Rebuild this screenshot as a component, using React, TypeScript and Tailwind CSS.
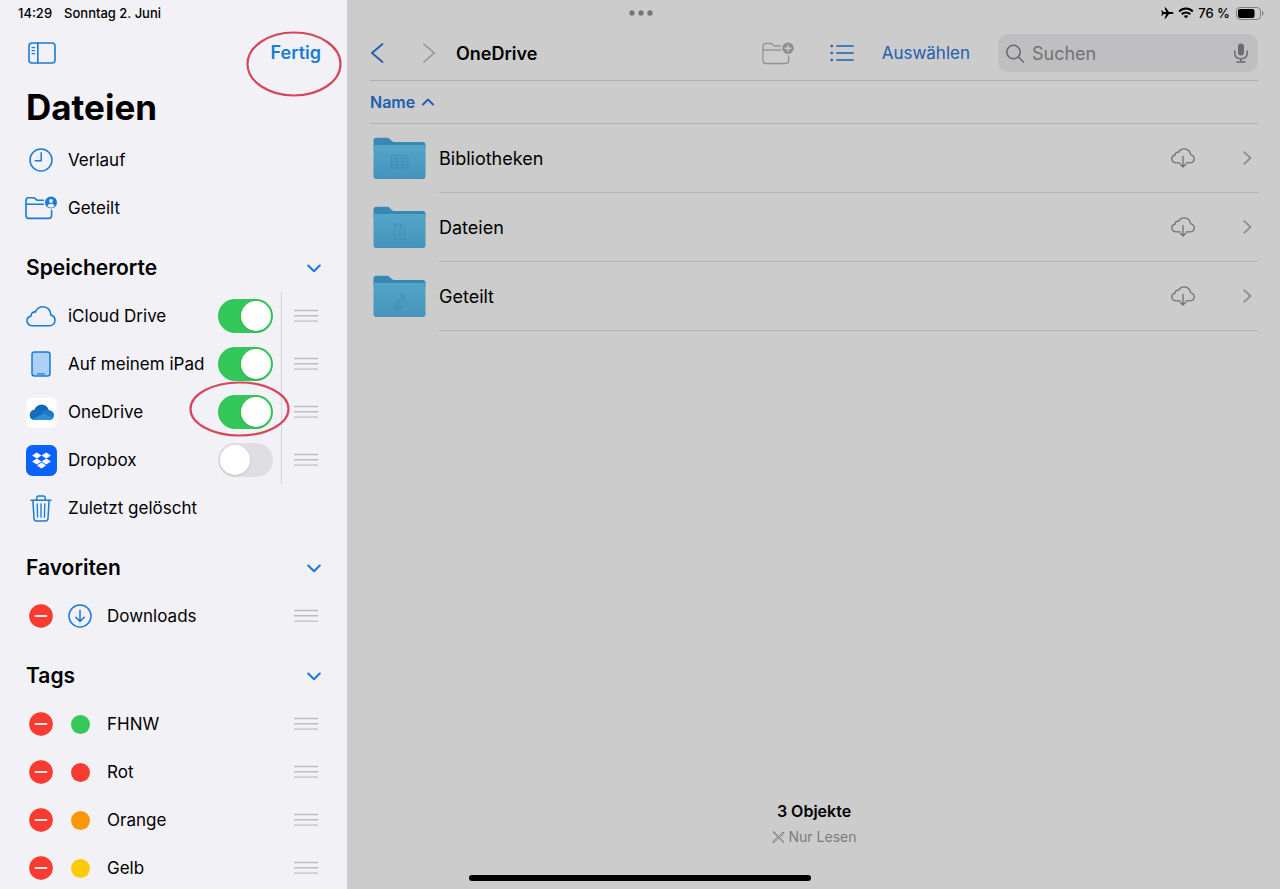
import React, { useState } from "react";

const BLUE = "#1a7bd6";
const DIM_BLUE = "#1c5fae";

function SidebarIcon() {
  return (
    <svg width="28" height="22" viewBox="0 0 28 22" fill="none" stroke={BLUE} strokeWidth="1.6" strokeLinecap="round">
      <rect x="1" y="1" width="26" height="20" rx="3" />
      <path d="M9.8 1v20" />
      <path d="M4 5.6h2.6M4 8.6h2.6M4 11.6h2.6" strokeWidth="1.2" />
    </svg>
  );
}

function ClockIcon() {
  return (
    <svg width="24" height="24" viewBox="0 0 24 24" fill="none" stroke={BLUE} strokeWidth="1.5" strokeLinecap="round" strokeLinejoin="round">
      <circle cx="12" cy="12" r="11" />
      <path d="M12.2 4.8v8H6.2" />
    </svg>
  );
}

function SharedFolderIcon() {
  return (
    <svg className="shrink-0" width="32" height="24" viewBox="0 0 32 24" fill="none" stroke={BLUE} strokeWidth="1.6" strokeLinecap="round" strokeLinejoin="round">
      <path d="M18.5 4.3h-6.2L10 2.4C9.5 2 9 1.8 8.3 1.8H3.6C1.9 1.8 1 2.7 1 4.4V19.6C1 21.4 2 22.4 3.8 22.4H23.8C25.6 22.4 26.6 21.4 26.6 19.6V14.5" />
      <path d="M1.3 8.3h17.2" />
      <circle cx="26" cy="6.6" r="6" fill={BLUE} stroke="none" />
      <circle cx="26" cy="5" r="1.9" fill="#f1f1f6" stroke="none" />
      <path d="M22.4 10.3c.5-1.9 1.8-2.6 3.6-2.6s3.1.7 3.6 2.6c-1 .9-2.2 1.4-3.6 1.4s-2.6-.5-3.6-1.4z" fill="#f1f1f6" stroke="none" />
    </svg>
  );
}

function CloudIcon() {
  return (
    <svg width="30" height="22" viewBox="0 0 30 22" fill="none" stroke={BLUE} strokeWidth="1.6" strokeLinejoin="round">
      <path d="M6.5 20.8C3.2 20.8 1 18.6 1 15.9C1 13.4 2.8 11.5 5 11.1C4.9 8.2 7 6.6 9.5 6.9C10.8 3.5 13.7 1.8 17 1.8C21.5 1.8 24.9 5.3 24.9 10.1C27.4 10.7 29 12.8 29 15.3C29 18.5 26.6 20.8 23.3 20.8Z" />
    </svg>
  );
}

function TabletIcon() {
  return (
    <svg width="20" height="26" viewBox="0 0 20 26" fill="none" stroke={BLUE} strokeWidth="1.5">
      <rect x="1" y="1" width="18" height="24" rx="2.5" fill="#aed0f7" />
      <path d="M6.5 22.8h7" strokeWidth="1.2" strokeLinecap="round" />
    </svg>
  );
}

function OneDriveIcon() {
  return (
    <svg className="shrink-0" width="31" height="31" viewBox="0 0 31 31">
      <rect x="0.5" y="0.5" width="30" height="30" rx="5" fill="#ffffff" />
      <path d="M9.400 23C6 23 3.800 21 3.800 18.200C3.800 15.400 5.800 13.200 8.600 12.800C9.800 9.600 12.600 7.800 15.800 7.800C19 7.800 21.600 9.800 22.600 12.900C25.800 13 28 15.200 28 18C28 21 25.800 23 22.800 23Z" fill="#1c7ac8" />
      <path d="M8.600 12.800C9.800 9.600 12.600 7.800 15.800 7.800C19 7.800 21.600 9.800 22.600 12.900C19.500 12.700 17.500 13.200 15.300 14.900C13.200 13.400 11 12.600 8.600 12.800Z" fill="#1467b6" />
      <path d="M8.600 12.800C11 12.600 13.200 13.400 15.300 14.900L17.600 16.500L6.400 22.200C4.800 21.400 3.800 20 3.800 18.200C3.800 15.400 5.800 13.200 8.600 12.800Z" fill="#186db9" />
      <path d="M6.400 22.200L17.600 16.500L27.100 20.900C26.300 22.300 24.800 23 22.800 23H9.400C8.300 23 7.200 22.700 6.400 22.200Z" fill="#2a8fd8" />
    </svg>
  );
}

function DropboxIcon() {
  return (
    <svg className="shrink-0" width="31" height="31" viewBox="0 0 31 31">
      <rect width="31" height="31" rx="6.5" fill="#0a61fb" />
      <g fill="#ffffff">
        <path d="M10.8 7.4l4.7 3-4.7 3-4.7-3z" />
        <path d="M20.2 7.4l4.7 3-4.7 3-4.7-3z" />
        <path d="M10.8 13.4l4.7 3-4.7 3-4.7-3z" />
        <path d="M20.2 13.4l4.7 3-4.7 3-4.7-3z" />
        <path d="M15.5 17.6l4.6 3-4.6 3-4.6-3z" />
      </g>
    </svg>
  );
}

function TrashIcon() {
  return (
    <svg width="22" height="27" viewBox="0 0 22 27" fill="none" stroke={BLUE} strokeWidth="1.5" strokeLinecap="round" strokeLinejoin="round">
      <path d="M1 5.3h20" />
      <path d="M6.7 5V3.2C6.7 1.8 7.5 1 8.9 1h4.2c1.4 0 2.2.8 2.2 2.2V5" />
      <path d="M2.9 5.5l1.1 18c.1 1.5 1 2.4 2.5 2.4h9c1.5 0 2.4-.9 2.5-2.4l1.1-18" />
      <path d="M7.2 9l.4 13.2M11 9v13.2M14.8 9l-.4 13.2" strokeWidth="1.3" />
    </svg>
  );
}

function DownloadIcon() {
  return (
    <svg width="24" height="24" viewBox="0 0 24 24" fill="none" stroke={BLUE} strokeWidth="1.5" strokeLinecap="round" strokeLinejoin="round">
      <circle cx="12" cy="12" r="11" />
      <path d="M12 6.3v11M7.8 13.2l4.2 4.2 4.2-4.2" />
    </svg>
  );
}

function MinusIcon() {
  return (
    <svg width="24" height="24" viewBox="0 0 24 24">
      <circle cx="12" cy="12" r="11.8" fill="#f83b30" />
      <path d="M6.6 12h10.8" stroke="#ffe9e7" strokeWidth="1.9" strokeLinecap="round" />
    </svg>
  );
}

function Handle({ label, divided = false }: { label: string; divided?: boolean }) {
  return (
    <button
      aria-label={`${label} verschieben`}
      className={`ml-2 flex h-full shrink-0 items-center border-l pl-3 ${divided ? "border-[#d3d3d8]" : "border-transparent"}`}
    >
      <svg width="24" height="14" viewBox="0 0 24 14" stroke="#bdbdc2" strokeWidth="1.4">
        <path d="M0 1.5h24M0 6.8h24M0 12.1h24" />
      </svg>
    </button>
  );
}

function RedRing({ className, w, h }: { className: string; w: number; h: number }) {
  return (
    <svg className={`pointer-events-none absolute z-10 ${className}`} width={w} height={h} viewBox={`0 0 ${w} ${h}`} fill="none">
      <ellipse cx={w / 2} cy={h / 2} rx={w / 2 - 1.5} ry={h / 2 - 1.5} stroke="#d4475a" strokeWidth="2.2" />
    </svg>
  );
}

function NavLink({ icon, label }: { icon: React.ReactNode; label: string }) {
  return (
    <li>
      <a href="#" className="flex h-12 items-center gap-3">
        <span className="flex w-[30px] shrink-0 justify-center">{icon}</span>
        {label}
      </a>
    </li>
  );
}

function LocationRow({ icon, label, initial, ringed = false }: { icon: React.ReactNode; label: string; initial: boolean; ringed?: boolean }) {
  const [on, setOn] = useState(initial);
  return (
    <li className="flex h-12 items-center pr-[29px]">
      <label className="flex h-full flex-1 items-center whitespace-nowrap">
        <span className="flex w-[30px] shrink-0 justify-center">{icon}</span>
        <span className="ml-3 flex-1">{label}</span>
        <span className="relative flex shrink-0">
          <input
            type="checkbox"
            role="switch"
            checked={on}
            onChange={(e) => setOn(e.target.checked)}
            className="h-[34px] w-[55px] appearance-none rounded-full bg-[#dedee3] p-[2px] before:block before:size-[30px] before:rounded-full before:bg-white before:shadow-sm checked:bg-[#33c759] checked:before:ml-[21px]"
          />
          {ringed && <RedRing className="-top-[14px] -left-[29px]" w={101} h={56} />}
        </span>
      </label>
      <Handle label={label} divided />
    </li>
  );
}

function EditableRow({ icon, label }: { icon: React.ReactNode; label: string }) {
  return (
    <li className="flex h-12 items-center pr-[29px]">
      <button aria-label={`${label} entfernen`} className="flex w-[30px] shrink-0 justify-center">
        <MinusIcon />
      </button>
      <span className="ml-3 flex w-6 shrink-0 justify-center">{icon}</span>
      <span className="ml-[15px] flex-1">{label}</span>
      <Handle label={label} />
    </li>
  );
}

function Section({ title, children }: { title: string; children: React.ReactNode }) {
  const [open, setOpen] = useState(true);
  return (
    <section>
      <h2 className="pt-3 text-[21px] font-semibold">
        <button aria-expanded={open} onClick={() => setOpen(!open)} className="flex h-12 w-full items-center justify-between pr-[26px]">
          {title}
          <svg className={open ? "" : "-rotate-90"} width="14" height="9" viewBox="0 0 14 9" fill="none" stroke={BLUE} strokeWidth="2" strokeLinecap="round" strokeLinejoin="round">
            <path d="M1.2 1.5L7 7.3l5.8-5.8" />
          </svg>
        </button>
      </h2>
      {open && <ul>{children}</ul>}
    </section>
  );
}

function FolderIcon({ kind }: { kind: "library" | "file" | "shared" }) {
  const id = `folder-${kind}`;
  return (
    <svg width="53" height="43" viewBox="0 0 53 43" fill="none">
      <defs>
        <linearGradient id={id} x1="0" y1="0" x2="0" y2="1">
          <stop offset="0" stopColor="#55a5c9" />
          <stop offset="1" stopColor="#4393bd" />
        </linearGradient>
      </defs>
      <path d="M.5 3.5C.5 1.8 1.5.8 3.2.8H13.5C15 .8 15.8 1.2 16.8 2.1L18.5 3.7C19.4 4.5 20.2 4.9 21.5 4.9H49.8C51.5 4.9 52.5 5.9 52.5 7.6V12H.5Z" fill="#3788b2" />
      <path d="M.5 8H52.5V39C52.5 40.7 51.5 41.7 49.8 41.7H3.2C1.5 41.7 .5 40.7 .5 39Z" fill={`url(#${id})`} />
      <path d="M1.5 41.2Q2.2 41.5 3.2 41.5H49.8Q50.8 41.5 51.5 41.2" stroke="#3b88b0" strokeWidth=".7" />
      <g stroke="#3483ae" strokeWidth=".8" opacity=".65">
        {kind === "library" && (
          <path d="M18.5 18.5h16.5v12.5H18.5zM18.5 21.5h16.5M18.5 24.7h16.5M18.5 27.9h16.5M24 18.5v12.5M29.5 21.5v9.5M18.5 31v2M35 31v2" />
        )}
        {kind === "file" && <path d="M21.5 18h6l4.5 4.5v10.5h-10.5zM27.5 18v4.5h4.5M24 26h5.5M24 29h5.5" />}
        {kind === "shared" && (
          <path d="M27.8 20.3a1.7 1.7 0 1 0 3.4 0 1.7 1.7 0 1 0-3.4 0M26.5 25.5q0-3 3-3t3 3zM22.8 27.3a1.7 1.7 0 1 0 3.4 0 1.7 1.7 0 1 0-3.4 0M21 33q0-3.5 3.5-3.5t3.5 3.5z" />
        )}
      </g>
    </svg>
  );
}

function CloudDownloadIcon() {
  return (
    <svg width="24" height="20" viewBox="0 0 24 20" fill="none" stroke="#717173" strokeWidth="1.3" strokeLinecap="round" strokeLinejoin="round">
      <path d="M9 14.8H5.4C2.7 14.8.8 13.2.8 10.9C.8 9 2.1 7.6 4 7.2C4 5.1 5.7 3.9 7.6 4.2C8.7 2 10.9.8 13.3.8C16.7.8 19.4 3.3 19.6 6.7C21.8 7.2 23.2 8.8 23.2 10.8C23.2 13.1 21.4 14.8 18.8 14.8H15" />
      <path d="M12 8.5v10.3M9.3 16.3l2.7 2.7 2.7-2.7" />
    </svg>
  );
}

function FileRow({ kind, label }: { kind: "library" | "file" | "shared"; label: string }) {
  return (
    <li>
      <a href="#" className="flex h-[69px] items-center gap-[13px] pl-[3px]">
        <FolderIcon kind={kind} />
        <span className="flex h-full flex-1 items-center border-b border-[#b4b4b6] pr-[6px]">
          <span className="flex-1">{label}</span>
          <CloudDownloadIcon />
          <svg className="ml-12" width="9" height="14" viewBox="0 0 9 14" fill="none" stroke="#8d8d8f" strokeWidth="1.7" strokeLinecap="round" strokeLinejoin="round">
            <path d="M1.2 1.2L7.5 7l-6.3 5.8" />
          </svg>
        </span>
      </a>
    </li>
  );
}

function StatusBar() {
  return (
    <div className="pointer-events-none absolute inset-x-0 top-0 z-20 grid h-[26px] grid-cols-3 items-center pr-4 pl-[18px] text-[13px] leading-5 font-medium">
      <div className="flex gap-3">
        <time>14:29</time>
        <span>Sonntag 2. Juni</span>
      </div>
      <svg className="justify-self-center" width="24" height="6" viewBox="0 0 24 6" fill="#77777a">
        <circle cx="3" cy="3" r="2.7" />
        <circle cx="12" cy="3" r="2.7" />
        <circle cx="21" cy="3" r="2.7" />
      </svg>
      <div className="flex items-center justify-self-end">
        <svg width="13" height="12" viewBox="0 0 13 12" fill="#000">
          <path d="M12.6 6c0-.7-.9-1.1-2-1.1H8L4.8.5H3.5L5.1 4.9H2.5L1.2 3.3H.3L1 6 .3 8.7h.9l1.3-1.6h2.6L3.5 11.5h1.3L8 7.1h2.6c1.1 0 2-.4 2-1.1z" />
        </svg>
        <svg className="ml-1" width="16" height="12" viewBox="0 0 16 12" fill="none" stroke="#000" strokeWidth="2">
          <path d="M1.2 4.5C5 .6 11 .6 14.8 4.5" />
          <path d="M3.7 7.2c2.4-2.4 6.2-2.4 8.6 0" />
          <path d="M5.7 9.1c1.4-1.2 3.2-1.2 4.6 0L8 11.5z" fill="#000" stroke="none" />
        </svg>
        <span className="ml-1">76 %</span>
        <svg className="ml-[6px]" width="28" height="13" viewBox="0 0 28 13">
          <rect x=".5" y=".5" width="24" height="12" rx="3.5" fill="none" stroke="#828284" />
          <rect x="2" y="2" width="16.5" height="9" rx="2" fill="#000" />
          <path d="M26 4.3c1 .3 1.6 1.2 1.6 2.2S27 8.4 26 8.7z" fill="#828284" />
        </svg>
      </div>
    </div>
  );
}

function Toolbar() {
  return (
    <header className="flex h-[55px] items-center border-b border-[#b0b0b2]">
      <button aria-label="Zurück">
        <svg width="14" height="20" viewBox="0 0 14 20" fill="none" stroke={DIM_BLUE} strokeWidth="1.8" strokeLinecap="round" strokeLinejoin="round">
          <path d="M12.5 1L2 10l10.5 9" />
        </svg>
      </button>
      <button aria-label="Vorwärts" disabled className="ml-[38px]">
        <svg width="14" height="20" viewBox="0 0 14 20" fill="none" stroke="#929294" strokeWidth="1.5" strokeLinecap="round" strokeLinejoin="round">
          <path d="M1.8 1l10.5 9-10.5 9" />
        </svg>
      </button>
      <h2 className="ml-5 flex-1 font-semibold">OneDrive</h2>
      <button aria-label="Neuer Ordner" disabled>
        <svg width="32" height="23" viewBox="0 0 32 23" fill="none" stroke="#959597" strokeWidth="1.4" strokeLinecap="round" strokeLinejoin="round">
          <path d="M18.5 4h-6L10.3 2.1C9.8 1.7 9.3 1.5 8.6 1.5H3.6C1.9 1.5 1 2.4 1 4.1V18.7C1 20.5 2 21.5 3.8 21.5H23.8C25.6 21.5 26.6 20.5 26.6 18.7V14" />
          <path d="M1.2 8h17.5" />
          <circle cx="26" cy="6.2" r="5.7" fill="#8e8e90" stroke="none" />
          <path d="M26 3.3v5.8M23.1 6.2h5.8" stroke="#cccccc" />
        </svg>
      </button>
      <button aria-label="Darstellung" className="ml-9">
        <svg width="24" height="18" viewBox="0 0 24 18" fill="none" stroke={DIM_BLUE} strokeWidth="1.7" strokeLinecap="round">
          <path d="M7 2h16M7 9h16M7 16h16" />
          <path d="M1.7 2h.1M1.7 9h.1M1.7 16h.1" strokeWidth="2.6" />
        </svg>
      </button>
      <button className="ml-7 text-[17px] leading-7 text-[#1c5fae]">Auswählen</button>
      <label className="ml-7 flex h-[38px] w-[260px] items-center rounded-[10px] bg-[#bfbfc1] pr-[9px] pl-2">
        <svg className="shrink-0" width="18" height="19" viewBox="0 0 18 19" fill="none" stroke="#6b6b6e" strokeWidth="1.6" strokeLinecap="round">
          <circle cx="7.5" cy="8" r="6.7" />
          <path d="M12.4 13l5 5" />
        </svg>
        <input
          type="search"
          aria-label="Suchen"
          placeholder="Suchen"
          className="ml-2 min-w-0 flex-1 bg-transparent outline-none placeholder:text-[#727275]"
        />
        <svg className="shrink-0" width="16" height="20" viewBox="0 0 16 20" fill="none" stroke="#6b6b6e" strokeWidth="1.5" strokeLinecap="round">
          <rect x="5" y=".5" width="6" height="12" rx="3" fill="#6b6b6e" stroke="none" />
          <path d="M1.8 8v2.2c0 3.5 2.5 5.5 6.2 5.5s6.2-2 6.2-5.5V8M8 15.7v3M4 19h8" />
        </svg>
      </label>
    </header>
  );
}

const tags = [
  { label: "FHNW", dot: "bg-[#35c759]" },
  { label: "Rot", dot: "bg-[#f83b30]" },
  { label: "Orange", dot: "bg-[#fb960b]" },
  { label: "Gelb", dot: "bg-[#fccb06]" },
];

export default function App() {
  return (
    <div className="relative flex h-screen overflow-hidden bg-[#cccccc] font-['Inter',sans-serif] text-[18px] text-black">
      <StatusBar />

      <aside className="w-[347px] shrink-0 overflow-hidden bg-[#f1f1f6] pt-[26px] pl-[26px] text-[17px] leading-7">
        <div className="flex h-[54px] items-center justify-between pr-[26px] pl-[2px]">
          <button aria-label="Seitenleiste">
            <SidebarIcon />
          </button>
          <div className="relative flex">
            <button className="text-[18px] font-semibold text-[#1a7bd6]">Fertig</button>
            <RedRing className="-top-2 -right-[21px]" w={96} h={66} />
          </div>
        </div>
        <h1 className="flex h-14 items-center pb-[2px] text-[35px] font-bold">Dateien</h1>

        <nav>
          <ul>
            <NavLink icon={<ClockIcon />} label="Verlauf" />
            <NavLink icon={<SharedFolderIcon />} label="Geteilt" />
          </ul>
        </nav>

        <Section title="Speicherorte">
          <LocationRow icon={<CloudIcon />} label="iCloud Drive" initial />
          <LocationRow icon={<TabletIcon />} label="Auf meinem iPad" initial />
          <LocationRow icon={<OneDriveIcon />} label="OneDrive" initial ringed />
          <LocationRow icon={<DropboxIcon />} label="Dropbox" initial={false} />
          <NavLink icon={<TrashIcon />} label="Zuletzt gelöscht" />
        </Section>

        <Section title="Favoriten">
          <EditableRow icon={<DownloadIcon />} label="Downloads" />
        </Section>

        <Section title="Tags">
          {tags.map((t) => (
            <EditableRow key={t.label} icon={<span className={`size-[19px] rounded-full ${t.dot}`} />} label={t.label} />
          ))}
        </Section>
      </aside>

      <main className="flex min-w-0 flex-1 flex-col pt-[26px] pr-[22px] pl-[23px]">
        <Toolbar />
        <div className="flex h-[43px] items-center border-b border-[#b0b0b2]">
          <button className="flex items-center gap-[7px] text-[16px] font-semibold text-[#1c5fae]">
            Name
            <svg width="12" height="8" viewBox="0 0 12 8" fill="none" stroke={DIM_BLUE} strokeWidth="1.8" strokeLinecap="round" strokeLinejoin="round">
              <path d="M1 6.5l5-5 5 5" />
            </svg>
          </button>
        </div>
        <ul className="flex-1">
          <FileRow kind="library" label="Bibliotheken" />
          <FileRow kind="file" label="Dateien" />
          <FileRow kind="shared" label="Geteilt" />
        </ul>
        <footer className="flex flex-col items-center pb-[42px]">
          <p className="text-[16px] leading-6 font-semibold">3 Objekte</p>
          <p className="flex items-center gap-1 pt-1 text-[14px] leading-5 text-[#7b7b7e]">
            <svg width="13" height="12" viewBox="0 0 13 12" fill="none" stroke="#7b7b7e" strokeWidth="1.2" strokeLinecap="round" strokeLinejoin="round">
              <path d="M1.5.8l10 10.4" />
              <path d="M7.3 4.8L10.8 1l1.3 1.2-3.5 3.7M5.3 6.2L1.8 9.7l-.8 1.7 1.8-.7 3.5-3.5" strokeWidth="1" />
            </svg>
            Nur Lesen
          </p>
        </footer>
      </main>

      <div className="pointer-events-none absolute inset-x-0 bottom-2 z-20 flex justify-center">
        <div className="h-[6px] w-[342px] rounded-full bg-black" />
      </div>
    </div>
  );
}
